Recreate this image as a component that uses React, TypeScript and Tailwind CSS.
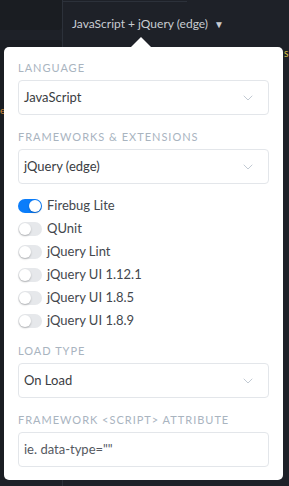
import { ChevronDown } from "lucide-react";

const Label = ({ children }: { children: React.ReactNode }) => (
  <div className="text-[11px] leading-[14px] tracking-[0.09em] uppercase text-[#a9b4bf] mb-[5px]">{children}</div>
);

const Select = ({ value }: { value: string }) => (
  <div className="h-[35px] border border-[#e3e6ea] rounded-[4px] flex items-center justify-between pl-[5px] pr-[12px] text-[13px] text-[#3a3d42]">
    <span>{value}</span>
    <ChevronDown className="w-[16px] h-[16px] text-[#b8c2cc]" strokeWidth={1.3} />
  </div>
);

const Toggle = ({ on, label }: { on?: boolean; label: string }) => (
  <div className="flex items-center h-[23px] gap-[5px]">
    <div
      className={
        on
          ? "w-[24px] h-[14px] rounded-full bg-[#0b7dfa] flex items-center justify-end pr-[1px]"
          : "w-[24px] h-[14px] rounded-full bg-[#e6e8eb] flex items-center pl-[1px]"
      }
    >
      <div className="w-[12px] h-[12px] rounded-full bg-white shadow-[0_1px_2px_rgba(0,0,0,0.25)]" />
    </div>
    <span className="text-[13px] text-[#43474d]">{label}</span>
  </div>
);

export default function App() {
  const libs = ["QUnit", "jQuery Lint", "jQuery UI 1.12.1", "jQuery UI 1.8.5", "jQuery UI 1.8.9"];

  return (
    <div className="relative w-[289px] h-[486px] overflow-hidden bg-[#1e2128] font-['Lato','Noto_Sans',sans-serif]">
      <div className="flex h-full">
        <div className="w-[62px] flex flex-col gap-[10px]">
          <div className="h-[30px] bg-[#1a1d22] rounded-br-[4px]" />
          <div className="h-[440px] bg-[#1a1d22] rounded-tr-[4px]" />
        </div>
        <div className="w-px bg-[#2c313a]" />
        <div className="flex-1 flex flex-col">
          <div className="w-[124px] h-[2px] border-b border-[#2c313a]" />
          <div className="pl-[9px] pt-[13px] text-[12px] text-[#c8ccd2] flex items-center gap-[6px]">
            <span>JavaScript + jQuery (edge)</span>
            <span className="text-[10px]">▼</span>
          </div>
        </div>
      </div>

      <span className="absolute left-[284px] top-[50px] text-[8px] leading-none text-[#e8d34a]">S</span>
      <span className="absolute left-0 top-[105px] text-[10px] leading-none text-[#d08a3a]">e</span>

      <div className="absolute left-[4px] top-[47px] w-[279px] h-[433px] bg-white rounded-[5px] px-[14px] pt-[14px]">
        <div className="absolute left-[127px] top-[-10px] w-0 h-0 border-l-[10px] border-r-[10px] border-b-[10px] border-l-transparent border-r-transparent border-b-white" />
        <Label>Language</Label>
        <Select value="JavaScript" />
        <div className="h-[15px]" />
        <Label>Frameworks &amp; Extensions</Label>
        <Select value="jQuery (edge)" />
        <div className="mt-[10px] flex flex-col">
          <Toggle on label="Firebug Lite" />
          {libs.map((l) => (
            <Toggle key={l} label={l} />
          ))}
        </div>
        <div className="h-[12px]" />
        <Label>Load Type</Label>
        <Select value="On Load" />
        <div className="h-[15px]" />
        <Label>Framework &lt;script&gt; attribute</Label>
        <div className="h-[35px] border border-[#e3e6ea] rounded-[4px] flex items-center pl-[5px] text-[13px] text-[#55595f]">
          ie. data-type=""
        </div>
      </div>
    </div>
  );
}
